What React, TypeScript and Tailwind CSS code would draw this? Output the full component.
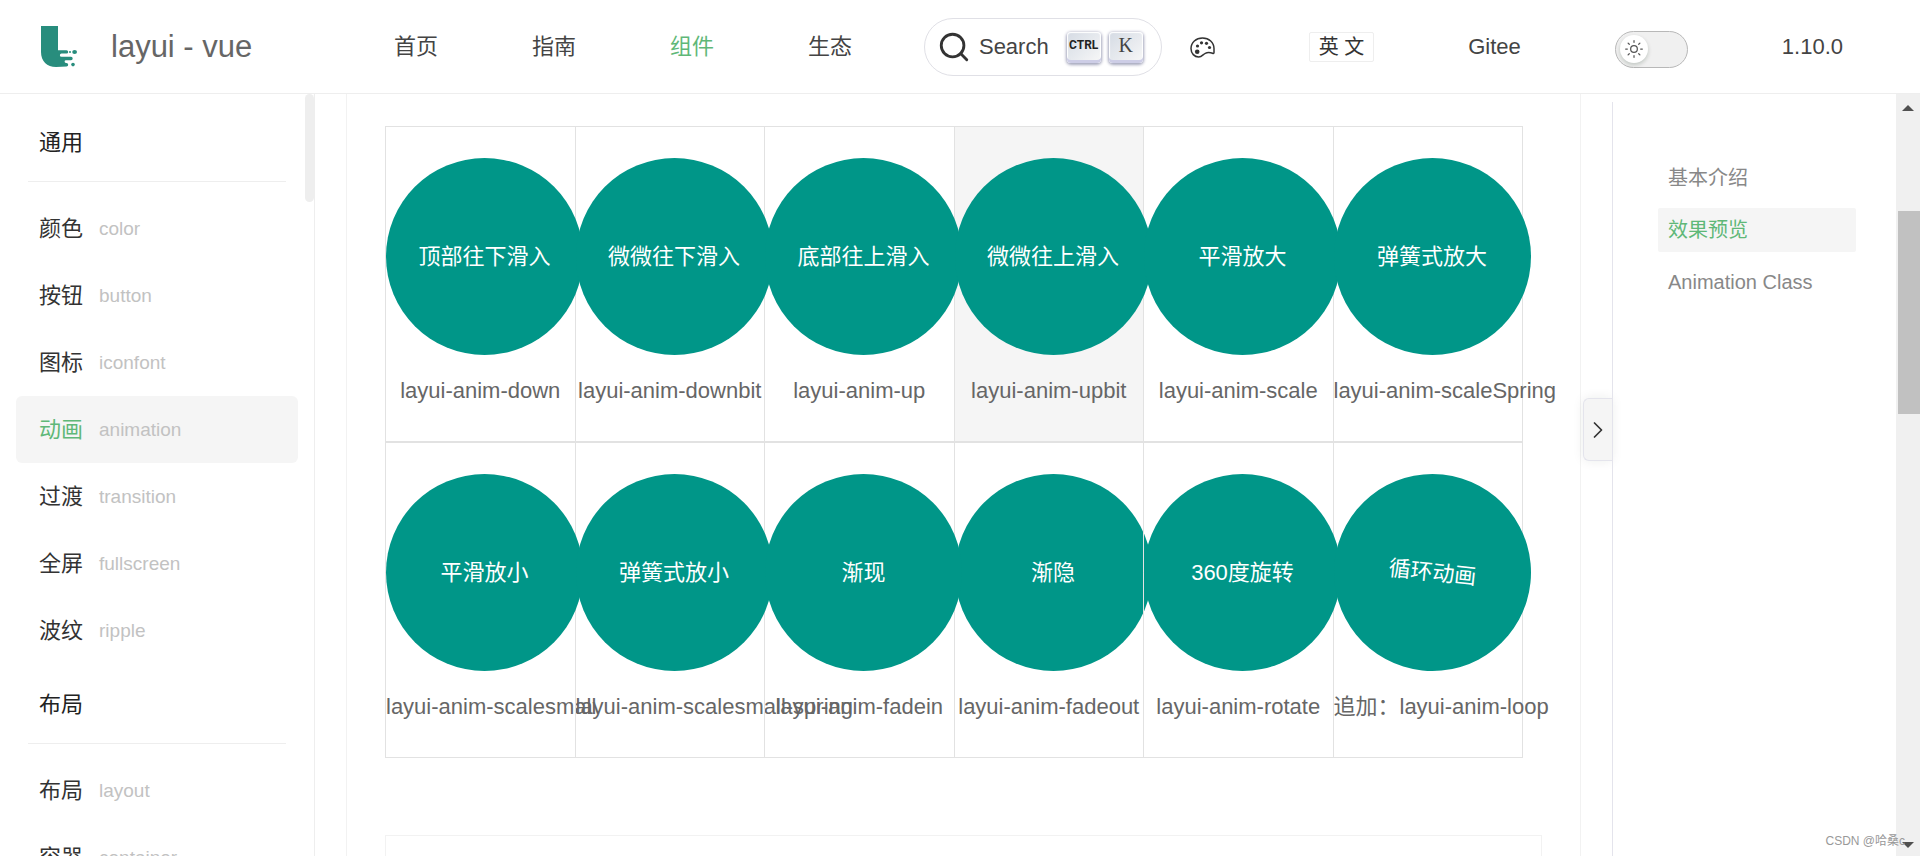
import { ChevronRight, Search, Sun } from "lucide-react";

const navLinks = ["首页", "指南", "组件", "生态"];

const menus = [
  {
    title: "通用",
    items: [
      { title: "颜色", subTitle: "color" },
      { title: "按钮", subTitle: "button" },
      { title: "图标", subTitle: "iconfont" },
      { title: "动画", subTitle: "animation" },
      { title: "过渡", subTitle: "transition" },
      { title: "全屏", subTitle: "fullscreen" },
      { title: "波纹", subTitle: "ripple" },
    ],
  },
  {
    title: "布局",
    items: [
      { title: "布局", subTitle: "layout" },
      { title: "容器", subTitle: "container" },
    ],
  },
];

const animations = [
  { name: "顶部往下滑入", code: "layui-anim-down" },
  { name: "微微往下滑入", code: "layui-anim-downbit" },
  { name: "底部往上滑入", code: "layui-anim-up" },
  { name: "微微往上滑入", code: "layui-anim-upbit", hovered: true },
  { name: "平滑放大", code: "layui-anim-scale" },
  { name: "弹簧式放大", code: "layui-anim-scaleSpring" },
  { name: "平滑放小", code: "layui-anim-scalesmall" },
  { name: "弹簧式放小", code: "layui-anim-scalesmall-spring" },
  { name: "渐现", code: "layui-anim-fadein" },
  { name: "渐隐", code: "layui-anim-fadeout", flat: true },
  { name: "360度旋转", code: "layui-anim-rotate" },
  { name: "循环动画", code: "追加：layui-anim-loop", rotated: true },
];

const anchors = ["基本介绍", "效果预览", "Animation Class"];

function Logo() {
  return (
    <svg width="38" height="42" viewBox="0 0 38 42" fill="none" aria-hidden="true">
      <path
        d="M0 0H17V24.2H25.5A1.7 1.7 0 0 1 25.5 27.6H20.5A1.5 1.5 0 0 0 20.5 30.8H30A1.7 1.7 0 0 1 30 34.2H25A1.3 1.3 0 0 0 25 37H25.5A1.7 1.7 0 0 1 25.5 40.4L15 41C6 41 0 35 0 26Z"
        fill="#288d7d"
      />
      <ellipse cx="33.6" cy="26" rx="2.4" ry="1.9" fill="#288d7d" />
      <circle cx="29" cy="26" r="1" fill="#288d7d" />
      <circle cx="32" cy="38.6" r="1.8" fill="#288d7d" />
    </svg>
  );
}

function PaletteIcon() {
  return (
    <svg width="25" height="21" viewBox="0 0 25 21" fill="none" aria-hidden="true">
      <path
        d="M1 11.5C1 5.5 6 1 12.5 1S24 5.5 24 11.5V15.5C24 16.3 23.3 16.6 22.6 16.3C20.5 15.5 17.5 15.2 15.3 16.3C12.8 17.6 12 19.9 8.6 20C4.5 20 1 16.5 1 11.5Z"
        stroke="#333"
        strokeWidth="1.5"
      />
      <circle cx="7.2" cy="14.8" r="2.3" fill="#333" />
      <circle cx="7.5" cy="9" r="1.6" fill="#333" />
      <circle cx="11.5" cy="5.8" r="1.6" fill="#333" />
      <circle cx="16.5" cy="6.3" r="1.6" fill="#333" />
      <circle cx="19.5" cy="10.5" r="1.6" fill="#333" />
    </svg>
  );
}

function Header() {
  return (
    <header className="flex shrink-0 items-center border-b border-[#eee] pt-[18px] pb-[17px]">
      <a href="#" className="flex w-[347px] shrink-0 items-center pl-[41px]">
        <Logo />
        <span className="ml-8 text-[31px] leading-10 text-[#666]">layui - vue</span>
      </a>
      <nav className="flex gap-[94px] pl-[47px]">
        {navLinks.map((link) => (
          <a key={link} href="#" className={link === "组件" ? "text-[#5fb878]" : "text-[#444]"}>
            {link}
          </a>
        ))}
      </nav>
      <div className="ml-auto flex items-center gap-[94px] pr-[77px]">
        <div className="flex items-center gap-7">
          <button className="flex h-[58px] items-center rounded-full border border-[#e0e0e6] pr-[18px] pl-3 text-[#444]">
            <Search size={34} strokeWidth={2} className="mr-2 text-[#333]" />
            <span>Search</span>
            <span className="ml-[18px] flex gap-2">
              <kbd className="flex h-[31px] w-[34px] items-center justify-center rounded bg-linear-to-br from-[#d5dbe4] to-[#f8f8f8] pb-1 font-['Roboto',sans-serif] text-xs font-bold text-[#222] shadow-[inset_0_-3px_0_0_#cdcde6,inset_0_0_1px_1px_#fff,0_1px_3px_1px_rgba(30,35,90,0.4)]">
                CTRL
              </kbd>
              <kbd className="flex h-[31px] w-[34px] items-center justify-center rounded bg-linear-to-br from-[#d5dbe4] to-[#f8f8f8] pb-1 font-['Liberation_Serif',serif] text-xl shadow-[inset_0_-3px_0_0_#cdcde6,inset_0_0_1px_1px_#fff,0_1px_3px_1px_rgba(30,35,90,0.4)]">
                K
              </kbd>
            </span>
          </button>
          <button aria-label="theme">
            <PaletteIcon />
          </button>
        </div>
        <button className="rounded-xs border border-[#eee] px-[9px] text-xl leading-7 text-[#333]">英 文</button>
        <a href="#" className="text-[#444]">
          Gitee
        </a>
        <button
          role="switch"
          aria-checked="false"
          aria-label="dark mode"
          className="mt-1 flex h-[37px] w-[73px] items-center rounded-full border border-[#b8b8b8] bg-[#f0f0f0] px-1"
        >
          <span className="flex size-7 items-center justify-center rounded-full bg-white shadow-[0_2px_4px_rgba(0,35,11,0.2)]">
            <Sun size={20} strokeWidth={1.5} className="text-[#555]" />
          </span>
        </button>
        <a href="#" className="text-[#444]">
          1.10.0
        </a>
      </div>
    </header>
  );
}

function SideMenu() {
  return (
    <aside className="flex w-[315px] shrink-0 overflow-hidden border-r border-[#eee]">
      <div className="flex-1 pt-2 pl-4">
        {menus.map((group) => (
          <section key={group.title}>
            <h2 className="mr-3 mb-[13px] ml-3 flex h-20 items-center border-b border-[#eee] pt-[2px] pl-[11px] text-[#222]">
              {group.title}
            </h2>
            <ul>
              {group.items.map((item) => (
                <li key={item.subTitle}>
                  <a
                    href="#"
                    className={
                      item.subTitle === "animation"
                        ? "flex h-[67px] items-center rounded-md bg-[#f5f5f5] pl-[23px] text-[#5fb878]"
                        : "flex h-[67px] items-center rounded-md pl-[23px] text-[#333]"
                    }
                  >
                    {item.title}
                    <span className="ml-4 text-[19px] text-[#c2c2c2]">{item.subTitle}</span>
                  </a>
                </li>
              ))}
            </ul>
          </section>
        ))}
      </div>
      <div className="ml-[7px] h-[108px] w-[9px] shrink-0 rounded-full bg-[#eee]" />
    </aside>
  );
}

function AnimationGrid() {
  return (
    <ul className="mr-5 grid grid-cols-6">
      {animations.map((anim) => (
        <li
          key={anim.code}
          className={
            anim.hovered
              ? "-mr-px min-w-0 border border-[#e2e2e2] bg-[#f5f5f5] pt-[31px] pb-[34px]"
              : "-mr-px min-w-0 border border-[#e2e2e2] pt-[31px] pb-[34px]"
          }
        >
          <div
            className={
              anim.flat
                ? "flex size-[197px] items-center justify-center rounded-full bg-[#009688] text-white"
                : anim.rotated
                  ? "relative flex size-[197px] rotate-6 items-center justify-center rounded-full bg-[#009688] text-white"
                  : "relative flex size-[197px] items-center justify-center rounded-full bg-[#009688] text-white"
            }
          >
            {anim.name}
          </div>
          <p className="mt-5 text-center leading-8 whitespace-nowrap text-[#666]">{anim.code}</p>
        </li>
      ))}
    </ul>
  );
}

function Directory() {
  return (
    <aside className="ml-[2px] flex w-[313px] shrink-0">
      <button
        aria-label="collapse"
        className="mt-[304px] flex h-[63px] w-[29px] shrink-0 items-center justify-center self-start rounded-l-md border border-r-0 border-[#e4e4ec] bg-[#f5f5f5] text-[#333] shadow-[0_0_12px_rgba(0,35,11,0.08)]"
      >
        <ChevronRight size={28} strokeWidth={1.5} className="shrink-0" />
      </button>
      <ul className="mt-2 flex flex-1 flex-col gap-2 border-l border-[#e4e4ec] pt-[54px] pr-10 pl-[45px]">
        {anchors.map((anchor) => (
          <li key={anchor}>
            <a
              href="#"
              className={
                anchor === "效果预览"
                  ? "flex h-11 items-center rounded-xs bg-[#f5f5f5] pl-[10px] text-xl text-[#5fb878]"
                  : "flex h-11 items-center rounded-xs pl-[10px] text-xl text-[#888]"
              }
            >
              {anchor}
            </a>
          </li>
        ))}
      </ul>
    </aside>
  );
}

function ScrollBar() {
  return (
    <div className="flex w-6 shrink-0 flex-col items-center bg-[#f0f0f0]">
      <svg className="mt-[11px] shrink-0" width="12" height="6" viewBox="0 0 12 6" aria-hidden="true">
        <path d="M0 6L6 0L12 6Z" fill="#505050" />
      </svg>
      <div className="mt-[100px] ml-[2px] h-[203px] w-[22px] shrink-0 bg-[#c1c1c1]" />
      <svg className="mt-auto mb-2 shrink-0" width="12" height="6" viewBox="0 0 12 6" aria-hidden="true">
        <path d="M0 0L6 6L12 0Z" fill="#505050" />
      </svg>
    </div>
  );
}

export default function App() {
  return (
    <div className="relative flex h-screen flex-col overflow-hidden bg-white font-['Liberation_Sans','Noto_Sans_CJK_SC',sans-serif] text-[22px] leading-[30px]">
      <Header />
      <div className="flex min-h-0 flex-1">
        <SideMenu />
        <main className="ml-[31px] min-w-0 flex-1 border-x border-[#f2f2f2] px-[38px] pt-8">
          <AnimationGrid />
          <div className="mt-[77px] h-40 border border-[#f2f2f2]" />
        </main>
        <Directory />
        <ScrollBar />
      </div>
      <span className="absolute right-[15px] bottom-[5px] text-xs leading-5 text-[#999]">CSDN @哈桑c</span>
    </div>
  );
}
